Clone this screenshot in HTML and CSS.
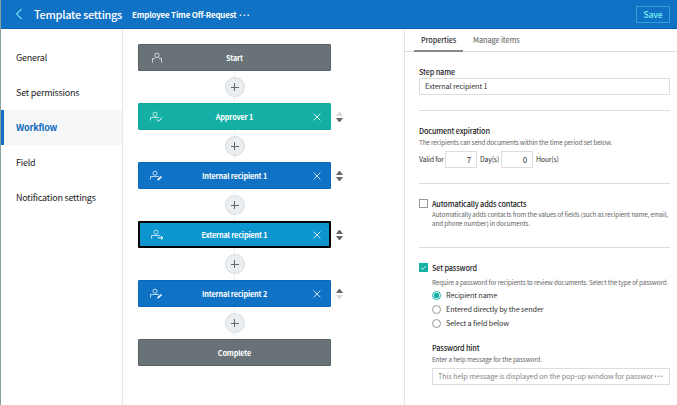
FILE: index.html
```html
<!DOCTYPE html>
<html lang="en">
<head>
<meta charset="utf-8">
<title>Template settings</title>
<link rel="stylesheet" href="styles.css">
</head>
<body>
<svg class="defs" width="0" height="0">
  <defs>
    <symbol id="person" viewBox="0 0 14 12"><circle cx="8" cy="3.300" r="2.200"/><path d="M3.500 10.500V6.500H5.400L6.400 5.600M12.500 10.500V6.500H10.600L9.600 5.600"/></symbol>
    <symbol id="person-half" viewBox="0 0 14 12"><circle cx="6" cy="3.200" r="2.100"/><path d="M1.500 9.500V6.500H10"/></symbol>
    <symbol id="close" viewBox="0 0 8 8"><path d="M.6 .6l6.800 6.800M7.400 .6L.6 7.400"/></symbol>
  </defs>
</svg>
<header class="topbar">
  <svg class="back" viewBox="0 0 7 12"><path d="M6.200 .8L1 6l5.200 5.200"/></svg>
  <h1 class="title">Template settings</h1>
  <span class="doc">Employee Time Off-Request <span class="dots">···</span></span>
  <button class="save">Save</button>
</header>
<div class="body">
  <nav class="side">
    <a>General</a>
    <a>Set permissions</a>
    <a class="on">Workflow</a>
    <a>Field</a>
    <a>Notification settings</a>
  </nav>
  <main class="flow">
    <div class="step end"><svg class="who"><use href="#person"/></svg><span>Start</span></div>
    <div class="add"><i></i></div>
    <div class="step approver"><svg class="who" viewBox="0 0 14 12"><use href="#person-half"/><path class="mark" d="M7.500 8.300l2 1.900 3.700-3.500"/></svg><span>Approver 1</span><svg class="x"><use href="#close"/></svg><div class="move first"><b></b><u></u></div></div>
    <div class="add"><i></i></div>
    <div class="step internal"><svg class="who" viewBox="0 0 14 12"><use href="#person-half"/><path class="pen" d="M8.500 10.200l4-3.500"/></svg><span>Internal recipient 1</span><svg class="x"><use href="#close"/></svg><div class="move"><b></b><u></u></div></div>
    <div class="add"><i></i></div>
    <div class="step external"><svg class="who" viewBox="0 0 14 12"><use href="#person-half"/><path class="mark" d="M7.700 8.800H12.800M11 7l1.900 1.800L11 10.600"/></svg><span>External recipient 1</span><svg class="x"><use href="#close"/></svg><div class="move"><b></b><u></u></div></div>
    <div class="add"><i></i></div>
    <div class="step internal"><svg class="who" viewBox="0 0 14 12"><use href="#person-half"/><path class="pen" d="M8.500 10.200l4-3.500"/></svg><span>Internal recipient 2</span><svg class="x"><use href="#close"/></svg><div class="move last"><b></b><u></u></div></div>
    <div class="add"><i></i></div>
    <div class="step end"><span>Complete</span></div>
  </main>
  <aside class="panel">
    <div class="tabs"><span class="tab on">Properties</span><span class="tab">Manage items</span></div>
    <section class="name">
      <h2>Step name</h2>
      <div class="input">External recipient 1</div>
    </section>
    <section class="expire">
      <h2>Document expiration</h2>
      <p>The recipients can send documents within the time period set below.</p>
      <div class="valid"><span class="valid-l">Valid for</span><div class="num">7</div><span class="day-l">Day(s)</span><div class="num">0</div><span>Hour(s)</span></div>
    </section>
    <section class="auto">
      <div class="check"><i class="box"></i><h2>Automatically adds contacts</h2></div>
      <p>Automatically adds contacts from the values of fields (such as recipient name, email,<br>and phone number) in documents.</p>
    </section>
    <section class="pass">
      <div class="check"><svg class="box ticked" viewBox="0 0 9 9"><path d="M1.300 4.600l2.300 2.200 4.200-4.400"/></svg><h2>Set password</h2></div>
      <p>Require a password for recipients to review documents. Select the type of password.</p>
      <div class="radio on"><i></i>Recipient name</div>
      <div class="radio"><i></i>Entered directly by the sender</div>
      <div class="radio"><i></i>Select a field below</div>
      <h2 class="hint">Password hint</h2>
      <p class="help">Enter a help message for the password.</p>
      <div class="input placeholder">This help message is displayed on the pop-up window for passwor<span class="dots">···</span></div>
    </section>
  </aside>
</div>
</body>
</html>
```
FILE: styles.css
```css
* { box-sizing: border-box; margin: 0; padding: 0; }
body { width: 677px; height: 405px; overflow: hidden; background: #fff; color: #333; border-left: 1px solid #8a9f9f; font-family: "Noto Sans CJK KR", "Noto Sans", sans-serif; font-size: 7.300px; letter-spacing: -.14px; white-space: nowrap; }
.defs { display: block; height: 0; }
svg { fill: none; stroke: #fff; flex: none; }
h1, h2 { font-weight: 500; }
.topbar { height: 29px; background: #0f72c5; border-bottom: 1px solid #0962b0; display: flex; align-items: center; color: #fff; margin-left: -1px; padding: 0 7px 0 15px; }
.back { width: 8px; height: 12px; stroke: #74e3ee; stroke-width: 1.100; }
.title { font-size: 11px; margin-left: 11px; line-height: 29px; width: 98px; letter-spacing: -.3px; flex: none; }
.doc { font-size: 8px; font-weight: 700; line-height: 29px; letter-spacing: -.2px; }
.dots { letter-spacing: -1.100px; font-weight: 700; }
.doc .dots { letter-spacing: -.9px; }
.save { margin-left: auto; width: 34px; height: 17px; background: none; border: 1px solid #32a0d5; color: #7df5f0; font: 500 8.500px/15px "Noto Sans CJK KR", sans-serif; letter-spacing: -.1px; }
.body { display: flex; height: 376px; }
.side { flex: none; width: 122px; border-right: 1px solid #e4e6e8; padding-top: 11px; }
.side a { display: block; height: 35px; line-height: 36px; padding-left: 15px; font-size: 9px; color: #222; letter-spacing: -.22px; }
.side a.on { background: #f5f7f9; border-left: 4px solid #0f72c5; margin-left: -1px; padding-left: 12px; color: #0f69bd; font-weight: 700; letter-spacing: -.2px; }
.flow { flex: none; width: 281px; padding: 15px 0 0 15px; }
.step { width: 193px; height: 27px; display: grid; grid-template-columns: 36px 1fr 36px; align-items: center; border: 1px solid; border-radius: 1px; color: #fff; font-weight: 700; line-height: 24px; letter-spacing: -.18px; position: relative; }
.step span { grid-column: 2; text-align: center; }
.who { width: 14px; height: 12px; margin-left: 10px; stroke-width: .7; grid-column: 1; }
.mark { stroke-width: 1; }
.pen { stroke-width: 1.600; }
.x { width: 8px; height: 8px; margin-left: 19px; stroke-width: .8; }
.end { background: #697276; border-color: #596266; }
.approver { background: #14b0a5; border-color: #10a79b; }
.internal { background: #0f72c5; border-color: #0b67ba; }
.external { background: #0d95d0; border: 2px solid #000; grid-template-columns: 35px 1fr 35px; }
.move { position: absolute; left: 197px; top: 8px; width: 7px; display: grid; gap: 2px; }
.external .move { left: 196px; top: 7px; }
.move b { border: solid transparent; border-width: 0 3.500px 4px; border-bottom-color: #666; }
.move u { border: solid transparent; border-width: 4px 3.500px 0; border-top-color: #666; }
.move.first b { border-bottom-color: #d9d9d9; }
.move.last u { border-top-color: #d9d9d9; }
.add { width: 193px; height: 32px; display: grid; place-items: center; background: linear-gradient(#eef0f2, #eef0f2) 96px 0 / 1px 100% no-repeat; }
.add i { width: 20px; height: 20px; border: 1px solid #d9dcde; border-radius: 50%; background: linear-gradient(#666, #666) center / 8px 1px no-repeat, linear-gradient(#666, #666) center / 1px 8px no-repeat, #eaeef1; }
.panel { flex: 1; min-width: 0; border-left: 1px solid #e4e4e4; }
.tabs { height: 23px; border-bottom: 1px solid #dcdcdc; display: flex; padding-left: 9px; }
.tab { height: 23px; line-height: 23px; font-weight: 500; color: #777; padding: 0 7px; margin-right: 3px; }
.tab.on { color: #333; border-bottom: 2px solid #888; width: 49px; }
section { margin: 0 7px 0 14px; border-bottom: 1px solid #ddd; }
h2 { font-size: 7.300px; line-height: 12px; color: #222; }
p { font-size: 6.300px; line-height: 9px; color: #666; letter-spacing: -.12px; }
.input { height: 17px; border: 1px solid #ddd; padding-left: 5px; line-height: 15px; color: #333; }
.name { height: 59px; padding-top: 14px; }
.expire { height: 73px; padding-top: 14px; }
.expire p { margin-top: 1px; }
.valid { display: flex; font-size: 6.900px; line-height: 16px; margin-top: 4px; letter-spacing: -.17px; }
.valid-l { width: 26px; flex: none; }
.num { width: 32px; height: 17px; border: 1px solid #ddd; text-align: right; padding-right: 5px; margin-right: 3px; line-height: 15px; font-size: 8px; flex: none; }
.day-l { width: 21px; flex: none; }
.auto { height: 64px; padding-top: 13px; }
.check { display: flex; align-items: center; height: 13px; }
.box { width: 9px; height: 9px; border: 1px solid #999; margin-right: 4px; }
.ticked { background: #14b0a5; border-color: #14b0a5; }
.auto p, .pass p { margin-left: 13px; }
.pass { border: 0; padding-top: 13px; }
.pass p { margin-top: 4px; }
.radio { display: flex; align-items: center; height: 14px; margin-left: 13px; color: #333; }
.radio i { width: 9px; height: 9px; border: 1px solid #999; border-radius: 50%; margin-right: 5px; }
.radio.on i { border-color: #14b0a5; background: radial-gradient(#14b0a5 2.500px, #fff 3px); }
.radio.on { margin-top: 1px; }
.pass .hint { margin: 12px 0 0 13px; }
.pass .help { margin-top: 1px; }
.pass .placeholder { margin: 4px 0 0 13px; color: #888; }
```
